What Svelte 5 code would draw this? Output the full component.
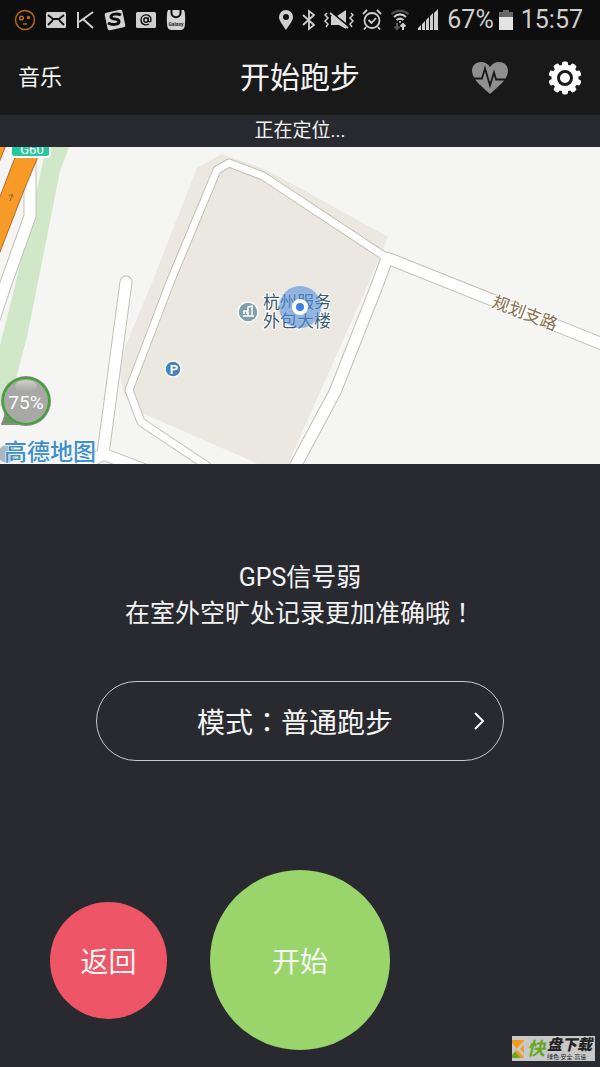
<script>
  let battery = 67;
  let badge = "75%";
  let mode = "普通跑步";

  const teeth = Array.from({ length: 10 }, (_, i) => i * 36);
</script>

<div class="screen">
  <div class="status-bar">
    <div class="notifications">
      <svg width="22" height="22" viewBox="0 0 22 22" fill="none" stroke="#b86a1c" stroke-width="1.5">
        <circle cx="11" cy="11" r="9.5" />
        <circle cx="7.5" cy="9" r="1.8" />
        <circle cx="14.5" cy="8.5" r="1" />
        <path d="M9 15h4" />
      </svg>
      <svg width="20" height="22" viewBox="0 0 20 22">
        <rect y="3" width="20" height="16" rx="1.5" fill="#cfcfcf" />
        <path d="M2 6l5 4h6l5-4M2 16l5-5M18 16l-5-5" fill="none" stroke="#0e0e0e" stroke-width="1.8" />
      </svg>
      <svg width="18" height="22" viewBox="0 0 18 22" fill="none" stroke="#cfcfcf" stroke-width="2">
        <path d="M2 3v16M17 3L3 13M7 10l10 9" />
      </svg>
      <svg width="22" height="22" viewBox="0 0 22 22">
        <rect x="2" y="2" width="18" height="18" rx="2" fill="#d4d4d4" transform="rotate(-12 11 11)" />
        <path d="M17 6c-4-2-10-1-10 2 0 3 9 1 8 5-1 3-7 3-11 1" fill="none" stroke="#0e0e0e" stroke-width="3" />
      </svg>
      <svg width="20" height="22" viewBox="0 0 20 22">
        <rect y="3" width="20" height="16" rx="1.5" fill="#cfcfcf" />
        <circle cx="10" cy="11" r="2.2" fill="none" stroke="#0e0e0e" stroke-width="1.4" />
        <path d="M12.3 8.5v3c0 2 2.7 1.8 2.7-.8 0-6.5-10-6.500-10 .3 0 4.500 4.500 6 8 4" fill="none" stroke="#0e0e0e" stroke-width="1.4" />
      </svg>
      <svg width="20" height="22" viewBox="0 0 20 22">
        <path d="M2 1h16c1.500 3 1.500 12 .5 17-.5 2-2 3-4 3h-9c-2 0-3.500-1-4-3C.5 13 .5 4 2 1z" fill="#d4d4d4" />
        <path d="M5.500 1v3c0 5.500 9 5.500 9 0V1" fill="none" stroke="#0e0e0e" stroke-width="2" />
        <text x="10" y="17" class="galaxy">Galaxy</text>
      </svg>
    </div>
    <div class="system">
      <svg width="16" height="22" viewBox="0 0 16 22">
        <path d="M8 1a7 7 0 0 0-7 7c0 4 4 8 7 13 3-5 7-9 7-13a7 7 0 0 0-7-7zm0 4a3 3 0 1 1 0 6 3 3 0 0 1 0-6z" fill="#cfcfcf" />
      </svg>
      <svg width="14" height="22" viewBox="0 0 14 22" fill="none" stroke="#cfcfcf" stroke-width="1.8">
        <path d="M1 6l11 10-5 4V2l5 4L1 16" />
      </svg>
      <svg width="30" height="22" viewBox="0 0 30 22">
        <path d="M3 4l-2 2 3 3-3 3 3 3-2 3M27 4l2 2-3 3 3 3-3 3 2 3" fill="none" stroke="#cfcfcf" stroke-width="1.5" />
        <path d="M7 7h4l11 9v4l-7-4H7zM13 7l9-6v13z" fill="#cfcfcf" />
        <path d="M7 3l17 14" stroke="#0e0e0e" stroke-width="1.5" />
        <path d="M6 4l18 15" stroke="#cfcfcf" stroke-width="1.8" />
      </svg>
      <svg width="20" height="22" viewBox="0 0 20 22" fill="none" stroke="#cfcfcf" stroke-width="1.8">
        <circle cx="10" cy="11.5" r="7.5" />
        <path d="M6.500 11l3 3 4.500-5M1 5l4-4M19 5l-4-4M4 18l-2 2.500M16 18l2 2.500" />
      </svg>
      <svg width="20" height="22" viewBox="0 0 20 22" fill="none" stroke="#cfcfcf" stroke-width="2">
        <path d="M1.500 5c5-4.500 12-4.500 17 0" stroke="#555" />
        <path d="M4 8c4-3.500 8-3.500 12 0M6.500 11c2.500-2 4.500-2 7 0" />
        <circle cx="10" cy="13" r="1" fill="#cfcfcf" stroke="none" />
        <path d="M7 14v6M4.500 17.500L7 20l2.500-2.500" stroke="#555" />
        <path d="M13 21v-6M10.500 17.500L13 15l2.500 2.500" />
      </svg>
      <svg width="21" height="22" viewBox="0 0 21 22" fill="#cfcfcf">
        <path d="M0 21v-2l3-3v5zM4 21v-6l3-3v9zM8 21V11l3-3v13zM12 21V7l3-3v17zM16 21V4l4-4v21z" />
      </svg>
      <span class="level">{battery}%</span>
      <svg width="14" height="22" viewBox="0 0 14 22">
        <path d="M4 1h6v2h4v6H0V3h4z" fill="#666" />
        <path d="M0 8h14v13H0z" fill="#e4e4e4" />
      </svg>
      <span class="clock">15:57</span>
    </div>
  </div>

  <header>
    <a href="#music" class="music">音乐</a>
    <h1>开始跑步</h1>
    <div class="tools">
      <button class="icon" aria-label="心率">
        <svg width="38" height="34" viewBox="0 0 38 34">
          <path d="M19 33C13 27 1 19 1 10 1 0 14-2 19 6c5-8 18-6 18 4 0 9-12 17-18 23z" fill="#8f8f8f" />
          <path d="M1 17.500h10l3-10 5 17 4-13 2 7h12" fill="none" stroke="#191919" stroke-width="1.8" />
        </svg>
      </button>
      <button class="icon" aria-label="设置">
        <svg width="34" height="34" viewBox="0 0 34 34">
          {#each teeth as angle}
            <rect x="14" y="0.5" width="6" height="8" rx="2" fill="#fff" transform="rotate({angle} 17 17)" />
          {/each}
          <circle cx="17" cy="17" r="13.5" fill="#fff" />
          <circle cx="17" cy="17" r="6.5" fill="none" stroke="#191919" stroke-width="3" />
        </svg>
      </button>
    </div>
  </header>

  <p class="locating">正在定位...</p>

  <svg class="map" viewBox="0 147 600 317" role="img" aria-label="地图">
    <defs>
      <linearGradient id="gloss" x1="0" y1="0" x2="0" y2="1">
        <stop offset="0" stop-color="#d0d0ce" />
        <stop offset="1" stop-color="#a5a5a3" />
      </linearGradient>
    </defs>
    <rect y="147" width="600" height="317" fill="#f5f5f3" />

    <!-- park and building block -->
    <path d="M46 147h23l-9 24-23 116-10 50-14 53-13 16v-61l14-55 23-100z" fill="#d0e8c8" />
    <path d="M197 168l25-14 44 16 34 18 88 49-10 25-90 202h-30l-116-51-18-18-4-20 1-18 30-72z" fill="#ebe8e1" />

    <!-- roads: casing first, then surface -->
    <g class="casing">
      <path class="wide" d="M30 147v69L5 286l-12 36" />
      <path class="wide" d="M126 282l-23 172M80 468l23-14 42 16" />
      <path class="thin" d="M387 258l-124-82-34-13-12 7-46 110-42 110 12 32 66 44" />
      <path class="wide" d="M620 351l-233-93-9 25-43 109-44 82" />
    </g>
    <g class="surface">
      <path class="wide" d="M30 147v69L5 286l-12 36" />
      <path class="wide" d="M126 282l-23 172M80 468l23-14 42 16" />
      <path class="thin" d="M387 258l-124-82-34-13-12 7-46 110-42 110 12 32 66 44" />
      <path class="wide" d="M620 351l-233-93-9 25-43 109-44 82" />
    </g>
    <path d="M19 147h23l-18 43-26 67v-55zM-2 145h8l-8 20z" fill="#f89a28" stroke="#b56a20" />
    <path d="M10 201l2-6m-3 1l3-2 1 3" fill="none" stroke="#9a6a2c" />
    <rect x="11" y="135" width="39" height="22" rx="3" fill="#26c6a0" stroke="#fff" stroke-width="2" />
    <text class="shield" x="32" y="154">G60</text>

    <text class="road" x="525" y="319" transform="rotate(21 525 313)">规划支路</text>
    <text class="place" x="263" y="308">杭州服务</text>
    <text class="place" x="263" y="327">外包大楼</text>

    <circle cx="248" cy="312" r="10" fill="#7e9fac" stroke="#fff" stroke-width="1.5" />
    <path d="M243 316h11M244 314v-3h3v3M248 316v-9l4-1v10" fill="none" stroke="#fff" stroke-width="1.5" />

    <circle cx="173" cy="369" r="8" fill="#4583c2" stroke="#fff" stroke-width="1.5" />
    <text class="parking" x="174" y="374">P</text>

    <circle cx="300" cy="307" r="21" fill="#5590da" opacity="0.6" />
    <circle cx="300" cy="307" r="8" fill="#fff" />
    <circle cx="300" cy="307" r="4" fill="#3d80dc" />

    <circle cx="7" cy="454" r="9" fill="#a9b8bf" />
    <text class="brand" x="4" y="460">高德地图</text>

    <path d="M5 410c1 5 0 8-3 14h24z" fill="#649a5c" stroke="#8b8b8b" stroke-width="2" stroke-linejoin="round" />
    <circle cx="26" cy="401" r="25" fill="#8b8b8b" />
    <circle cx="26" cy="401" r="23" fill="#a8a8a6" stroke="#3aa62c" stroke-width="2" />
    <ellipse cx="26" cy="386" rx="11" ry="6" fill="url(#gloss)" />
    <text class="badge" x="26" y="409">{badge}</text>
  </svg>

  <main>
    <p class="hint">
      GPS信号弱<br />在室外空旷处记录更加准确哦<span class="mark">！</span>
    </p>

    <button class="mode">
      <span>模式<span class="mark">：</span>{mode}</span>
      <svg width="12" height="18" viewBox="0 0 12 18" fill="none" stroke="#fff" stroke-width="2">
        <path d="M2 1l8 8-8 8" />
      </svg>
    </button>

    <div class="actions">
      <button class="round back">返回</button>
      <button class="round start">开始</button>
    </div>
  </main>

  <div class="watermark">
    <svg width="13" height="18" viewBox="0 0 13 18">
      <path d="M0 0h12v18H0z" fill="#f39a1c" />
      <path d="M0 18V9l9 9z" fill="#65a81f" />
      <path d="M12 1L4 9l8 8v-4L8 9l4-4zM0 3l5 6-5 6z" fill="#c8c8c8" />
    </svg>
    <span class="kuai">快</span>
    <div class="site">
      <strong>盘下载</strong>
      <small>绿色·安全·高速</small>
    </div>
  </div>
</div>

<style>
  :global(body) {
    margin: 0;
    background: #292a2f;
  }

  .screen {
    position: relative;
    display: flex;
    flex-direction: column;
    min-height: 100vh;
    background: #292a2f;
    color: #f4f4f4;
    font-family: Roboto, "Noto Sans CJK SC", sans-serif;
  }

  p,
  h1 {
    margin: 0;
    font-weight: 400;
  }

  svg {
    display: block;
    flex: none;
  }

  button {
    padding: 0;
    border: none;
    background: none;
    color: inherit;
    font-family: inherit;
    cursor: pointer;
  }

  .status-bar {
    display: flex;
    align-items: center;
    justify-content: space-between;
    height: 40px;
    padding: 0 17px 0 14px;
    background: #0e0e0e;
    color: #cfcfcf;
  }

  .notifications {
    display: flex;
    gap: 10px;
  }

  .system {
    display: flex;
    align-items: center;
    gap: 8px;
  }

  .level,
  .clock {
    font-size: 25px;
    line-height: 40px;
  }

  .level {
    margin-right: -3px;
  }

  .galaxy {
    fill: #222;
    font-size: 5px;
    font-weight: 700;
    text-anchor: middle;
  }

  header {
    display: grid;
    grid-template-columns: 1fr auto 1fr;
    align-items: center;
    height: 75px;
    padding: 0 18px;
    background: #191919;
  }

  .music {
    color: inherit;
    font-size: 22px;
    line-height: 28px;
    text-decoration: none;
  }

  h1 {
    font-size: 30px;
    line-height: 40px;
  }

  .tools {
    display: flex;
    align-items: center;
    justify-content: flex-end;
    gap: 39px;
  }

  .locating {
    font-size: 19px;
    line-height: 32px;
    text-align: center;
  }

  .map {
    width: 100%;
    height: auto;
  }

  .casing,
  .surface {
    fill: none;
    stroke-linecap: round;
    stroke-linejoin: round;
  }

  .casing {
    stroke: #c2c0b6;
  }

  .surface {
    stroke: #fff;
  }

  .casing .wide {
    stroke-width: 13px;
  }

  .casing .thin {
    stroke-width: 9px;
  }

  .surface .wide {
    stroke-width: 11px;
  }

  .surface .thin {
    stroke-width: 7px;
  }

  .place,
  .road {
    font-size: 17px;
    stroke: #fff;
    stroke-width: 2px;
    paint-order: stroke;
  }

  .place {
    fill: #38586e;
  }

  .road {
    fill: #86704e;
    text-anchor: middle;
  }

  .shield,
  .parking,
  .badge {
    fill: #fff;
    text-anchor: middle;
  }

  .shield {
    font-size: 13px;
  }

  .parking {
    font-size: 13px;
    font-weight: 700;
  }

  .badge {
    font-size: 19px;
  }

  .brand {
    fill: #3e8fcb;
    font-size: 23px;
    font-weight: 500;
    stroke: #fff;
    stroke-width: 1px;
    paint-order: stroke;
  }

  main {
    display: flex;
    flex: 1;
    flex-direction: column;
    align-items: center;
    padding: 96px 0 17px;
  }

  .hint {
    font-size: 25px;
    line-height: 36px;
    text-align: center;
  }

  .mark {
    font-family: "Noto Sans CJK TC", sans-serif;
    line-height: 1;
  }

  .mode {
    display: grid;
    grid-template-columns: 1fr auto 1fr;
    align-items: center;
    width: 68%;
    height: 80px;
    margin: 49px 0;
    padding: 0 18px 0 8px;
    border: 1px solid #c8c8c8;
    border-radius: 40px;
    font-size: 28px;
  }

  .mode > span {
    grid-column: 2;
  }

  .mode svg {
    justify-self: end;
  }

  .actions {
    display: grid;
    grid-template-columns: 1fr 180px 1fr;
    align-items: center;
    gap: 43px;
    width: 100%;
    margin-top: auto;
  }

  .round {
    border-radius: 50%;
    font-size: 28px;
    aspect-ratio: 1;
  }

  .back {
    justify-self: end;
    width: 117px;
    background: #ee5566;
  }

  .start {
    width: 180px;
    background: #9ad56b;
  }

  .watermark {
    position: absolute;
    right: 5px;
    bottom: 6px;
    display: flex;
    align-items: center;
    gap: 2px;
    height: 25px;
    width: 83px;
    background: #c8c8c8;
    color: #222;
  }

  .kuai {
    color: #65a81f;
    font-size: 18px;
    font-style: italic;
    font-weight: 700;
    line-height: 25px;
  }

  .site {
    display: flex;
    flex-direction: column;
  }

  .site strong {
    font-size: 15px;
    font-style: italic;
    font-weight: 900;
    line-height: 16px;
  }

  .site small {
    font-size: 6px;
    line-height: 8px;
    white-space: nowrap;
  }
</style>
